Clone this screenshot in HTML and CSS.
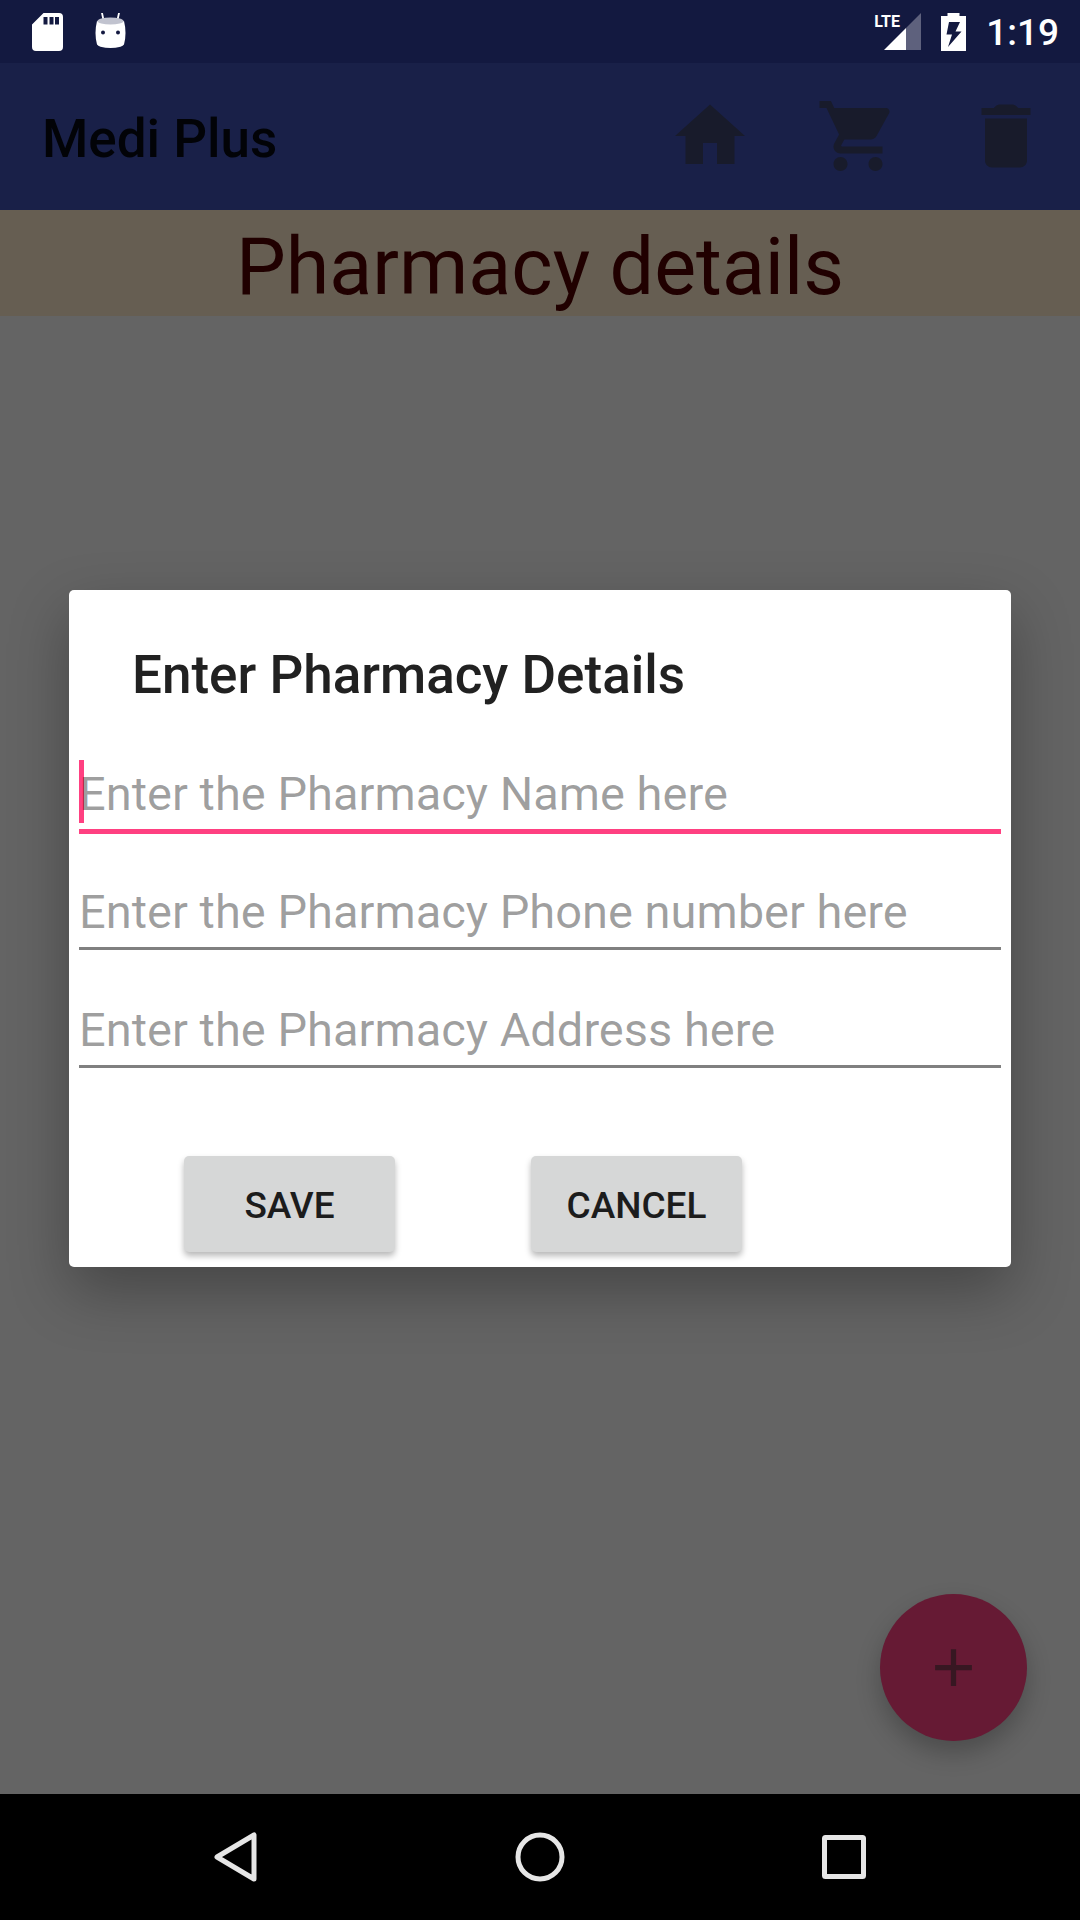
FILE: index.html
```html
<!DOCTYPE html>
<html lang="en">
<head>
<meta charset="utf-8">
<meta name="viewport" content="width=device-width, initial-scale=1">
<title>Medi Plus</title>
<link rel="stylesheet" href="styles.css">
</head>
<body>
<div class="screen">
  <div class="status-bar">
    <div class="status-group status-notices">
      <svg class="sd-icon" viewBox="0 0 31 38" aria-hidden="true">
        <path fill="#fff" fill-rule="evenodd" d="M11.500 0H27a4 4 0 0 1 4 4v30a4 4 0 0 1-4 4H4a4 4 0 0 1-4-4V11.500zM11.500 4v7.500h4V4zm6 0v7.500h4V4zm5.500 0v7.500h4V4z"/>
      </svg>
      <svg class="droid-icon" viewBox="0 0 31 38" aria-hidden="true">
        <path d="M7 0l1.500 7M24 0l-1.500 7" stroke="#fff" stroke-width="1.800" stroke-linecap="round"/>
        <path fill="#fff" d="M2 8Q15.500 13 29 8Q32 20 29 31.500Q28 33 25.500 33.700Q15.500 36.500 5.500 33.700Q3 33 2 31.500Q-1 20 2 8z"/>
        <ellipse cx="15.500" cy="8" rx="13" ry="3.600" fill="#c1c3cf"/>
        <circle cx="8" cy="19.500" r="2" fill="#131940"/>
        <circle cx="23" cy="19.500" r="2" fill="#131940"/>
      </svg>
    </div>
    <div class="status-group status-system">
      <div class="signal">
        <svg class="signal-icon" viewBox="0 0 37 37" aria-hidden="true">
          <path fill="#5e617d" d="M37 0v37H22V15z"/>
          <path fill="#fff" d="M0 37L22 15v22z"/>
        </svg>
        <span class="signal-type">LTE</span>
      </div>
      <svg class="battery-icon" viewBox="0 0 25 38" aria-hidden="true">
        <path fill="#fff" fill-rule="evenodd" d="M6.500 0h12v3H25v35H0V3h6.500zM8 9L5.500 21.500h5.500L7 34 20.500 18.500H14.500L19 9z"/>
      </svg>
      <time class="clock">1:19</time>
    </div>
  </div>

  <div class="stage">
    <header class="app-bar">
      <h1 class="app-title">Medi Plus</h1>
      <nav class="app-actions">
        <button class="icon-button" type="button" aria-label="Home">
          <svg viewBox="0 0 24 24"><path d="M10 20v-6h4v6h5v-8h3L12 3 2 12h3v8z"/></svg>
        </button>
        <button class="icon-button" type="button" aria-label="Cart">
          <svg viewBox="0 0 24 24"><path d="M7 18c-1.100 0-1.990.9-1.990 2S5.900 22 7 22s2-.9 2-2-.9-2-2-2zM1 2v2h2l3.600 7.590-1.350 2.450c-.16.28-.25.61-.25.96 0 1.100.9 2 2 2h12v-2H7.420c-.14 0-.25-.11-.25-.25l.03-.12.9-1.630h7.450c.75 0 1.410-.41 1.750-1.030l3.580-6.490c.08-.14.12-.31.12-.48 0-.55-.45-1-1-1H5.210l-.94-2H1zm16 16c-1.100 0-1.990.9-1.990 2s.89 2 1.990 2 2-.9 2-2-.9-2-2-2z"/></svg>
        </button>
        <button class="icon-button" type="button" aria-label="Delete">
          <svg viewBox="0 0 24 24"><path d="M6 19c0 1.100.9 2 2 2h8c1.100 0 2-.9 2-2V7H6v12zM19 4h-3.500l-.45-.45C14.600 3.150 14.200 3 13.600 3h-3.200c-.6 0-1 .15-1.450.55L8.500 4H5v2h14V4z"/></svg>
        </button>
      </nav>
    </header>
    <h2 class="page-title">Pharmacy details</h2>

    <button class="fab" type="button" aria-label="Add pharmacy">
      <svg viewBox="0 0 24 24"><path d="M19 13h-6v6h-2v-6H5v-2h6V5h2v6h6v2z"/></svg>
    </button>

    <div class="overlay">
      <form class="dialog" role="dialog" aria-labelledby="dialog-title">
        <h2 class="dialog-title" id="dialog-title">Enter Pharmacy Details</h2>
        <div class="field field-active">
          <input class="field-input" type="text" aria-label="Pharmacy name" placeholder="Enter the Pharmacy Name here">
        </div>
        <div class="field">
          <input class="field-input" type="tel" aria-label="Pharmacy phone number" placeholder="Enter the Pharmacy Phone number here">
        </div>
        <div class="field">
          <input class="field-input" type="text" aria-label="Pharmacy address" placeholder="Enter the Pharmacy Address here">
        </div>
        <div class="dialog-actions">
          <button class="dialog-button" type="button">SAVE</button>
          <button class="dialog-button" type="button">CANCEL</button>
        </div>
      </form>
    </div>
  </div>

  <nav class="nav-bar">
    <button class="nav-button" type="button" aria-label="Back">
      <svg viewBox="0 0 50 50"><path d="M43 3v44L6 25z"/></svg>
    </button>
    <button class="nav-button" type="button" aria-label="Home screen">
      <svg viewBox="0 0 50 50"><circle cx="25" cy="25" r="22"/></svg>
    </button>
    <button class="nav-button" type="button" aria-label="Recent apps">
      <svg viewBox="0 0 50 50"><rect x="5.500" y="5.500" width="39" height="39" rx="1"/></svg>
    </button>
  </nav>
</div>
</body>
</html>
```
FILE: styles.css
```css
* {
  box-sizing: border-box;
}

body {
  margin: 0;
  font-family: Roboto, "Liberation Sans", sans-serif;
  background: #646464;
}

h1,
h2 {
  margin: 0;
}

button {
  padding: 0;
  border: 0;
  background: none;
  font-family: inherit;
}

svg {
  display: block;
}

.screen {
  display: flex;
  flex-direction: column;
  min-height: 100vh;
}

/* System status bar */
.status-bar {
  display: flex;
  justify-content: space-between;
  height: 63px;
  padding: 0 21px 0 32px;
  background: #131940;
  color: #fff;
}

.status-group {
  display: flex;
  align-items: center;
}

.status-notices {
  gap: 32px;
}

.status-system {
  gap: 20px;
}

.sd-icon,
.droid-icon {
  width: 31px;
  height: 38px;
}

.signal {
  position: relative;
  padding-left: 10px;
}

.signal-icon {
  width: 37px;
  height: 37px;
}

.signal-type {
  position: absolute;
  top: 0;
  left: 0;
  font-size: 16px;
  font-weight: 700;
  line-height: 18px;
}

.battery-icon {
  width: 25px;
  height: 38px;
}

.clock {
  padding-top: 2px;
  font-size: 37px;
  font-weight: 500;
  line-height: 44px;
}

/* App content */
.stage {
  position: relative;
  flex: 1;
  background: #646464;
}

.app-bar {
  display: flex;
  align-items: center;
  justify-content: space-between;
  height: 147px;
  padding: 0 32px 2px 42px;
  background: #192048;
}

.app-title {
  padding-top: 6px;
  font-size: 53px;
  font-weight: 500;
  line-height: 62px;
  color: #020307;
}

.app-actions {
  display: flex;
  gap: 64px;
}

.icon-button svg {
  width: 84px;
  height: 84px;
  fill: #181b2b;
}

.page-title {
  padding-top: 8px;
  background: #665e52;
  color: #200000;
  font-size: 79px;
  font-weight: 400;
  line-height: 98px;
  text-align: center;
}

.fab {
  position: absolute;
  right: 53px;
  bottom: 53px;
  display: grid;
  place-items: center;
  width: 147px;
  height: 147px;
  border-radius: 50%;
  background: #661a34;
  box-shadow: 0 12px 24px rgba(0, 0, 0, 0.24);
}

.fab svg {
  width: 63px;
  height: 63px;
  fill: #371722;
}

/* Dialog */
.overlay {
  position: absolute;
  inset: 0;
  display: grid;
  align-items: center;
  padding: 0 69px;
}

.dialog {
  padding: 0 10px 15px;
  border-radius: 5px;
  background: #fff;
  box-shadow: 0 24px 60px rgba(0, 0, 0, 0.3);
}

.dialog-title {
  padding: 54px 53px 53px;
  font-size: 53px;
  font-weight: 500;
  line-height: 62px;
  color: #212121;
}

.field {
  position: relative;
  height: 118px;
}

.field-active::before {
  content: "";
  position: absolute;
  top: 1px;
  left: 0;
  width: 5px;
  height: 63px;
  background: #ff4081;
}

.field-input {
  position: relative;
  display: block;
  width: 100%;
  height: 73px;
  padding: 0 0 2px;
  border: 0;
  border-bottom: 3px solid #808080;
  border-radius: 0;
  outline: 0;
  background: transparent;
  caret-color: #ff4081;
  color: #212121;
  font-family: inherit;
  font-size: 47px;
}

.field-active .field-input {
  height: 75px;
  border-bottom: 5px solid #ff4081;
}

.field-input::placeholder {
  color: rgba(0, 0, 0, 0.38);
  opacity: 1;
}

.dialog-actions {
  display: flex;
  gap: 136px;
  padding: 43px 0 0 105px;
}

.dialog-button {
  width: 211px;
  height: 96px;
  padding-top: 2px;
  border-radius: 5px;
  background: #d6d7d7;
  box-shadow: 0 4px 6px rgba(0, 0, 0, 0.28);
  color: #1c1c1c;
  font-size: 37px;
  font-weight: 500;
}

/* System navigation bar */
.nav-bar {
  display: flex;
  height: 126px;
  padding: 0 84px;
  background: #000;
}

.nav-button {
  display: grid;
  flex: 1;
  place-items: center;
}

.nav-button svg {
  width: 50px;
  height: 50px;
  fill: none;
  stroke: #e6e6e6;
  stroke-width: 5;
  stroke-linejoin: round;
}
```
